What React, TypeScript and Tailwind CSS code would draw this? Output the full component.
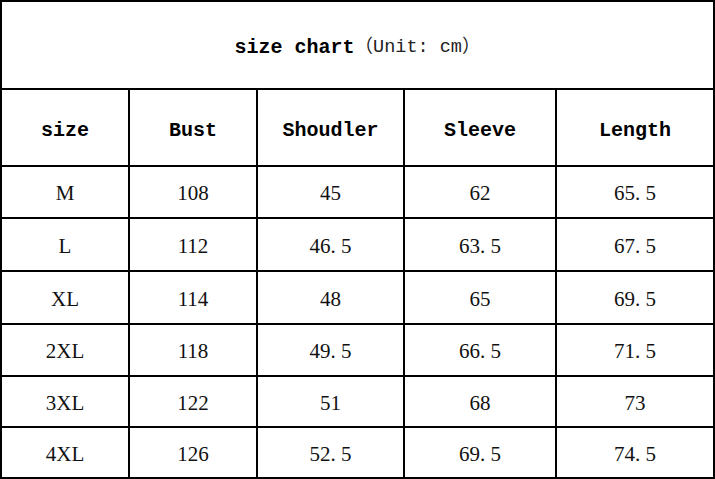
const headers = ['size', 'Bust', 'Shoudler', 'Sleeve', 'Length']

const rows = [
  { h: 'h-[50px]', cells: ['M', '108', '45', '62', '65. 5'] },
  { h: 'h-[51px]', cells: ['L', '112', '46. 5', '63. 5', '67. 5'] },
  { h: 'h-[51px]', cells: ['XL', '114', '48', '65', '69. 5'] },
  { h: 'h-[50px]', cells: ['2XL', '118', '49. 5', '66. 5', '71. 5'] },
  { h: 'h-[49px]', cells: ['3XL', '122', '51', '68', '73'] },
  { h: 'h-[49px]', cells: ['4XL', '126', '52. 5', '69. 5', '74. 5'] },
]

export default function App() {
  return (
    <div className="w-[715px] h-[479px] bg-white">
      <div className="grid grid-cols-[126px_126px_145px_150px_156px] gap-[2px] p-[2px] bg-black w-[715px] h-[479px]">
        {/* title */}
        <div className="col-span-5 h-[86px] bg-white flex items-center justify-center pt-[5px] text-black">
          <span className="font-['Liberation_Mono',monospace] font-bold text-[20px]">size chart</span>
          <span className="font-['Liberation_Mono','Noto_Sans_CJK_SC',monospace] text-[18.5px] text-[#222] whitespace-pre">
            （Unit: cm）
          </span>
        </div>

        {headers.map((h) => (
          <div
            key={h}
            className="h-[75px] bg-white flex items-center justify-center pt-[6px] font-['Liberation_Mono',monospace] font-bold text-[20px] text-black"
          >
            {h}
          </div>
        ))}

        {rows.map((row, i) =>
          row.cells.map((c, j) => (
            <div
              key={`${i}-${j}`}
              className={`${row.h} bg-white flex items-center justify-center pt-[4px] font-['Liberation_Serif',serif] text-[21px] text-[#111]`}
            >
              {c}
            </div>
          ))
        )}
      </div>
    </div>
  )
}
